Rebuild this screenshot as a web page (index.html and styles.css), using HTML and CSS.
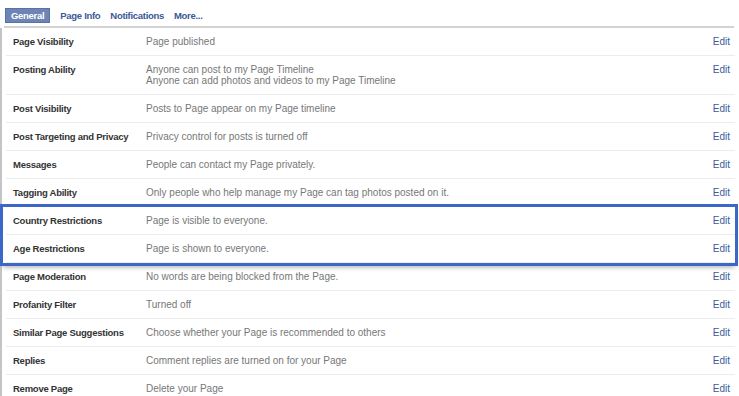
FILE: index.html
```
<!DOCTYPE html>
<html lang="en">
<head>
    <meta charset="UTF-8">
    <title>Page Settings</title>
    <link rel="stylesheet" href="styles.css">
</head>
<body>

    <!-- Zakładki -->
    <div class="tabs">
        <a class="tab active">General</a>
        <a class="tab">Page Info</a>
        <a class="tab">Notifications</a>
        <a class="tab">More...</a>
    </div>

    <!-- Lista ustawień -->
    <div class="settings">
        <div class="row">
            <div class="label">Page Visibility</div>
            <div class="value">Page published</div>
            <a class="edit">Edit</a>
        </div>
        <div class="row">
            <div class="label">Posting Ability</div>
            <div class="value">Anyone can post to my Page Timeline<br>Anyone can add photos and videos to my Page Timeline</div>
            <a class="edit">Edit</a>
        </div>
        <div class="row">
            <div class="label">Post Visibility</div>
            <div class="value">Posts to Page appear on my Page timeline</div>
            <a class="edit">Edit</a>
        </div>
        <div class="row">
            <div class="label">Post Targeting and Privacy</div>
            <div class="value">Privacy control for posts is turned off</div>
            <a class="edit">Edit</a>
        </div>
        <div class="row">
            <div class="label">Messages</div>
            <div class="value">People can contact my Page privately.</div>
            <a class="edit">Edit</a>
        </div>
        <div class="row">
            <div class="label">Tagging Ability</div>
            <div class="value">Only people who help manage my Page can tag photos posted on it.</div>
            <a class="edit">Edit</a>
        </div>

        <!-- Zaznaczone wiersze -->
        <div class="highlight">
            <div class="row">
                <div class="label">Country Restrictions</div>
                <div class="value">Page is visible to everyone.</div>
                <a class="edit">Edit</a>
            </div>
            <div class="row">
                <div class="label">Age Restrictions</div>
                <div class="value">Page is shown to everyone.</div>
                <a class="edit">Edit</a>
            </div>
        </div>

        <div class="row">
            <div class="label">Page Moderation</div>
            <div class="value">No words are being blocked from the Page.</div>
            <a class="edit">Edit</a>
        </div>
        <div class="row">
            <div class="label">Profanity Filter</div>
            <div class="value">Turned off</div>
            <a class="edit">Edit</a>
        </div>
        <div class="row">
            <div class="label">Similar Page Suggestions</div>
            <div class="value">Choose whether your Page is recommended to others</div>
            <a class="edit">Edit</a>
        </div>
        <div class="row">
            <div class="label">Replies</div>
            <div class="value">Comment replies are turned on for your Page</div>
            <a class="edit">Edit</a>
        </div>
        <div class="row">
            <div class="label">Remove Page</div>
            <div class="value">Delete your Page</div>
            <a class="edit">Edit</a>
        </div>
    </div>

</body>
</html>
```
FILE: styles.css
```
body {
    font-family: 'Liberation Sans', Arial, sans-serif;
    font-size: 10px;
    background-color: #fff;
    color: #333;
    margin: 0;
    overflow: hidden;
}

/* Zakładki */
.tabs {
    display: flex;
    align-items: center;
    gap: 10px;
    height: 22px;
    padding: 4px 0 0 1px;
    margin: 0 5px 0 4px;
    border-bottom: 2px solid #d3d3d3;
}

.tab {
    font-weight: bold;
    font-size: 9.5px;
    letter-spacing: -0.3px;
    color: #3b5998;
    padding: 2px 0;
}

.tab.active {
    background-color: #6d84b4;
    border: 1px solid #5872a7;
    color: #fff;
    padding: 1px 5px;
}

/* Lista ustawień */
.settings {
    border-left: 2px solid #c4c4c4;
}

.row {
    display: grid;
    grid-template-columns: 133px 1fr auto;
    line-height: 11px;
    padding: 8px 5px 8px 7px;
    margin-left: 4px;
    margin-right: 4px;
    border-bottom: 1px solid #ececec;
}

.label {
    font-weight: bold;
    font-size: 9.5px;
    letter-spacing: -0.25px;
    color: #333;
}

.value {
    color: #777;
}

.edit {
    color: #3b5998;
}

/* Niebieska ramka zaznaczenia */
.highlight {
    outline: 3px solid #3c66c8;
    margin: 0 4px 0 1px;
    box-shadow: 0 4px 5px rgba(0, 0, 0, 0.35);
}

.highlight .row {
    margin-left: 3px;
    margin-right: 0;
}
```
